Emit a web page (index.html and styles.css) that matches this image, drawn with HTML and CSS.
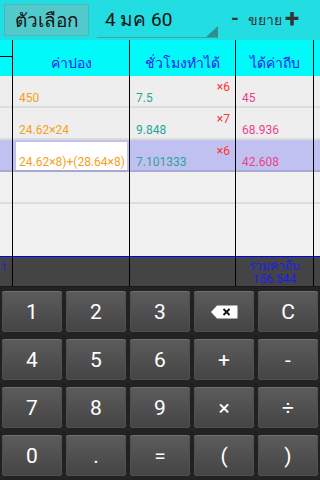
FILE: index.html
```html
<!DOCTYPE html>
<html>
<head>
<meta charset="utf-8">
<link rel="stylesheet" href="styles.css">
</head>
<body>
<div class="app">
  <div class="topbar">
    <div class="optbtn">ตัวเลือก</div>
    <div class="spinner">4 มค 60</div>
    <div class="zoom">
      <span class="minus">-</span>
      <span class="zlabel">ขยาย</span>
      <span class="plus">+</span>
    </div>
  </div>

  <div class="row head">
    <div class="cell c0"><div class="c0top"></div></div>
    <div class="cell">ค่าปอง</div>
    <div class="cell">ชั่วโมงทำได้</div>
    <div class="cell">ได้ค่าถีบ</div>
    <div class="cell"></div>
  </div>

  <div class="row data">
    <div class="cell"></div>
    <div class="cell orange">450</div>
    <div class="cell teal">7.5<span class="mult">×6</span></div>
    <div class="cell pink">45</div>
    <div class="cell"></div>
  </div>
  <div class="row data">
    <div class="cell"></div>
    <div class="cell orange">24.62×24</div>
    <div class="cell teal">9.848<span class="mult">×7</span></div>
    <div class="cell pink">68.936</div>
    <div class="cell"></div>
  </div>
  <div class="row data sel">
    <div class="cell"></div>
    <div class="cell orange"><div class="input">24.62×8)+(28.64×8)</div></div>
    <div class="cell teal">7.101333<span class="mult">×6</span></div>
    <div class="cell pink">42.608</div>
    <div class="cell"></div>
  </div>
  <div class="row data">
    <div class="cell"></div>
    <div class="cell"></div>
    <div class="cell"></div>
    <div class="cell"></div>
    <div class="cell"></div>
  </div>
  <div class="row data tall">
    <div class="cell"></div>
    <div class="cell"></div>
    <div class="cell"></div>
    <div class="cell"></div>
    <div class="cell"></div>
  </div>

  <div class="row foot">
    <div class="cell fc0"><span>1</span></div>
    <div class="cell"></div>
    <div class="cell"></div>
    <div class="cell total"><span>รวมค่าถีบ</span><span>156.544</span></div>
    <div class="cell"></div>
  </div>

  <div class="keypad">
    <div class="key">1</div>
    <div class="key">2</div>
    <div class="key">3</div>
    <div class="key"><svg width="27" height="14" viewBox="0 0 27 14"><path d="M0 7 L6 0.5 H26.5 V13.5 H6 Z" fill="#fff"/><path d="M12.5 4 L18.5 10 M18.5 4 L12.5 10" stroke="#111" stroke-width="1.8"/></svg></div>
    <div class="key">C</div>
    <div class="key">4</div>
    <div class="key">5</div>
    <div class="key">6</div>
    <div class="key">+</div>
    <div class="key">-</div>
    <div class="key">7</div>
    <div class="key">8</div>
    <div class="key">9</div>
    <div class="key">×</div>
    <div class="key">÷</div>
    <div class="key">0</div>
    <div class="key">.</div>
    <div class="key">=</div>
    <div class="key">(</div>
    <div class="key">)</div>
  </div>
</div>
</body>
</html>
```

FILE: styles.css
```css
* { box-sizing: border-box; }
html, body { margin: 0; padding: 0; }
body {
  width: 320px;
  height: 480px;
  overflow: hidden;
  font-family: Roboto, "Noto Sans", "DejaVu Sans", sans-serif;
  background: #222;
}
.app { width: 320px; height: 480px; display: flex; flex-direction: column; }

.topbar {
  height: 40px;
  background: #22dde2;
  display: flex;
  align-items: center;
  padding: 0 4px;
}
.optbtn {
  width: 85px;
  height: 32px;
  background: #52c9cb;
  border: 1px solid #46b8ba;
  border-radius: 1px;
  display: flex;
  align-items: center;
  justify-content: center;
  font-size: 19px;
  color: #151515;
}
.spinner {
  position: relative;
  margin-left: 8px;
  margin-top: 2px;
  width: 121px;
  height: 34px;
  border-bottom: 1px solid #3aa6a8;
  font-size: 19px;
  color: #111;
  display: flex;
  align-items: center;
  padding-left: 8px;
  padding-bottom: 3px;
}
.spinner::after {
  content: "";
  position: absolute;
  right: 0;
  bottom: 0;
  border-style: solid;
  border-width: 0 0 11px 12px;
  border-color: transparent transparent #2e8f92 transparent;
}
.zoom {
  display: flex;
  align-items: center;
  margin-left: 13px;
  color: #333;
}
.minus { font-size: 20px; font-weight: bold; width: 10px; margin-top: -4px; }
.zlabel { font-size: 14px; margin-left: 7px; }
.plus { font-size: 26px; font-weight: bold; margin-left: 3px; margin-top: -4px; line-height: 1; }

.row {
  display: grid;
  grid-template-columns: 12px 116px 105px 77px 1fr;
  column-gap: 1px;
  background: #000;
}
.cell { background: #eeeeee; position: relative; overflow: hidden; }

.head { height: 36px; }
.head .cell {
  background: #00fafa;
  display: flex;
  align-items: flex-end;
  justify-content: center;
  font-size: 14px;
  color: #2020ee;
  padding-bottom: 2px;
}
.head .c0 { align-items: flex-start; padding: 0; }
.c0top { width: 100%; height: 17px; border-bottom: 1px solid #000; }

.data { height: 32px; }
.data .cell {
  border-bottom: 2px solid #dcdcdc;
  font-size: 12px;
  display: flex;
  align-items: flex-end;
  padding: 0 0 1px 6px;
}
.data.tall { height: 52px; }
.data.tall .cell { border-bottom: none; background: #f1f1f1; }
.data:nth-child(6) .cell { background: #f0f0f0; }
.sel .cell { background: #c1c1f1; border-bottom-color: #a9a9d3; }

.orange { color: #f5a020; }
.teal { color: #26a69a; }
.pink { color: #ee3f8a; }
.mult {
  position: absolute;
  right: 5px;
  top: 4px;
  color: #ff3333;
  font-size: 12px;
}
.sel .cell.orange { padding: 2px 2px 0 3px; }
.input {
  background: #fff;
  width: 100%;
  height: 28px;
  display: flex;
  align-items: flex-end;
  padding: 0 0 1px 3px;
  white-space: nowrap;
  overflow: hidden;
}

.foot { height: 31px; border-bottom: 1px solid #1a1a1a; }
.foot .cell {
  background: #444;
  border-top: 1px solid #0000ff;
}
.fc0 { color: #1c1cf0; font-size: 11px; padding: 4px 0 0 1px; }
.total {
  color: #1c1cf0;
  font-size: 12px;
  display: flex;
  flex-direction: column;
  align-items: center;
  justify-content: flex-start;
  padding-top: 3px;
  line-height: 13px;
}

.keypad {
  flex: 1;
  background: #222;
  display: grid;
  grid-template-columns: repeat(5, 60px);
  grid-auto-rows: 41px;
  column-gap: 4px;
  row-gap: 7px;
  padding: 4px 2px 0 2px;
}
.key {
  background: linear-gradient(#5c5c5c, #444);
  border-radius: 3px;
  box-shadow: inset 0 1px 0 #707070, inset 0 0 0 1px #505050;
  color: #fff;
  font-size: 21px;
  display: flex;
  align-items: center;
  justify-content: center;
}
```
